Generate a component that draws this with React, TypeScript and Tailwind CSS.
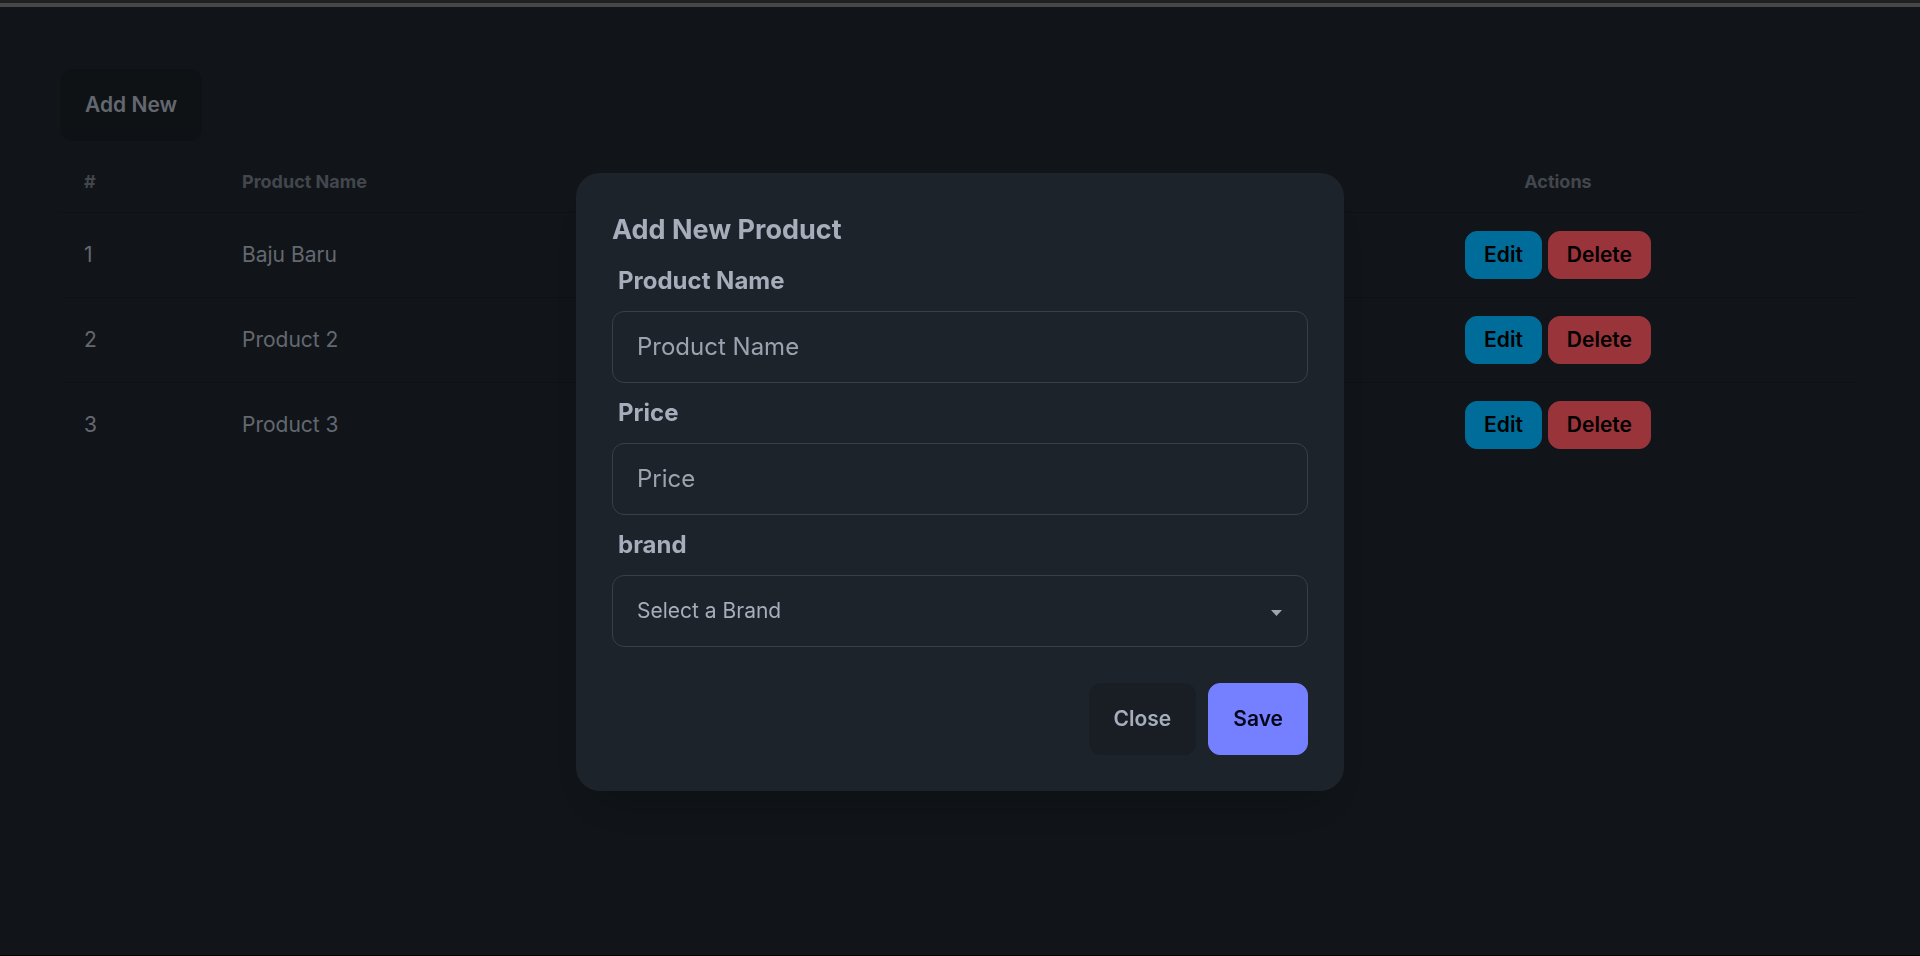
import React from "react";

const rows = [
  { id: 1, name: "Baju Baru" },
  { id: 2, name: "Product 2" },
  { id: 3, name: "Product 3" },
];

function Field({ label, placeholder }: { label: string; placeholder: string }) {
  return (
    <div className="flex flex-col">
      <label className="px-[6px] py-[12px] text-[24px] leading-[36px] font-bold text-[#a6adbb]">{label}</label>
      <input
        placeholder={placeholder}
        className="h-[72px] w-full rounded-[12px] border border-[#383f47] bg-[#1d232a] px-[24px] text-[24px] text-[#a6adbb] outline-none placeholder:text-[#9ca3af]"
      />
    </div>
  );
}

export default function App() {
  return (
    <div className="min-h-[956px] bg-[#1d232a] font-['Inter',sans-serif]">
      <div className="h-[3px] bg-[#202020]" />
      <div className="h-[4px] bg-[#474747]" />
      <div className="px-[60px] pt-[62px]">
        <button className="h-[72px] rounded-[12px] border border-[#191e24] bg-[#191e24] px-[24px] text-[21px] font-semibold text-[#a6adbb]">
          Add New
        </button>
        <table className="mt-[11px] w-full table-fixed border-collapse">
          <colgroup>
            <col className="w-[158px]" />
            <col className="w-[402px]" />
            <col className="w-[320px]" />
            <col className="w-[316px]" />
            <col className="w-[604px]" />
          </colgroup>
          <thead>
            <tr className="border-b border-[#191e24]">
              <th className="px-[24px] py-[18px] text-left text-[18px] leading-[24px] font-bold text-[#6f7681]">#</th>
              <th className="px-[24px] py-[18px] text-left text-[18px] leading-[24px] font-bold text-[#6f7681]">Product Name</th>
              <th className="px-[24px] py-[18px]" />
              <th className="px-[24px] py-[18px]" />
              <th className="px-[24px] py-[18px] text-center text-[18px] leading-[24px] font-bold text-[#6f7681]">Actions</th>
            </tr>
          </thead>
          <tbody>
            {rows.map((r, i) => (
              <tr key={r.id} className={i < rows.length - 1 ? "border-b border-[#191e24]" : ""}>
                <td className="px-[24px] py-[18px] align-middle text-[21px] leading-[30px] text-[#a6adbb]">{r.id}</td>
                <td className="px-[24px] py-[18px] align-middle text-[21px] leading-[30px] text-[#a6adbb]">{r.name}</td>
                <td className="px-[24px] py-[18px]" />
                <td className="px-[24px] py-[18px]" />
                <td className="px-[24px] py-[18px] align-middle">
                  <div className="flex justify-center gap-[6px]">
                    <button className="h-[48px] rounded-[12px] border border-[#00b5ff] bg-[#00b5ff] px-[18px] text-[21px] font-semibold text-black">
                      Edit
                    </button>
                    <button className="h-[48px] rounded-[12px] border border-[#ff5861] bg-[#ff5861] px-[18px] text-[21px] font-semibold text-black">
                      Delete
                    </button>
                  </div>
                </td>
              </tr>
            ))}
          </tbody>
        </table>
      </div>

      {/* modal overlay */}
      <div className="fixed inset-x-0 top-[7px] bottom-0 flex items-center justify-center bg-black/40">
        <div className="w-[768px] rounded-[24px] bg-[#1d232a] p-[36px] shadow-[0_25px_50px_-12px_rgba(0,0,0,0.25)]">
          <h3 className="text-[27px] leading-[42px] font-bold text-[#a6adbb]">Add New Product</h3>
          <Field label="Product Name" placeholder="Product Name" />
          <Field label="Price" placeholder="Price" />
          <div className="flex flex-col">
            <label className="px-[6px] py-[12px] text-[24px] leading-[36px] font-bold text-[#a6adbb]">brand</label>
            <div className="flex h-[72px] w-full items-center justify-between rounded-[12px] border border-[#383f47] bg-[#1d232a] pl-[24px] pr-[25px]">
              <span className="text-[21px] text-[#a6adbb]">Select a Brand</span>
              <svg width="11" height="6" viewBox="0 0 11 6" className="mt-[4px]">
                <path d="M0 0 L11 0 L5.5 6 Z" fill="#a0a5ae" />
              </svg>
            </div>
          </div>
          <div className="mt-[36px] flex justify-end gap-[12px]">
            <button className="h-[72px] rounded-[12px] border border-[#191e24] bg-[#191e24] px-[24px] text-[21px] font-semibold text-[#a6adbb]">
              Close
            </button>
            <button className="h-[72px] rounded-[12px] border border-[#7480ff] bg-[#7480ff] px-[24px] text-[21px] font-semibold text-[#050617]">
              Save
            </button>
          </div>
        </div>
      </div>
      <div className="fixed inset-x-0 bottom-0 h-px bg-black" />
    </div>
  );
}
